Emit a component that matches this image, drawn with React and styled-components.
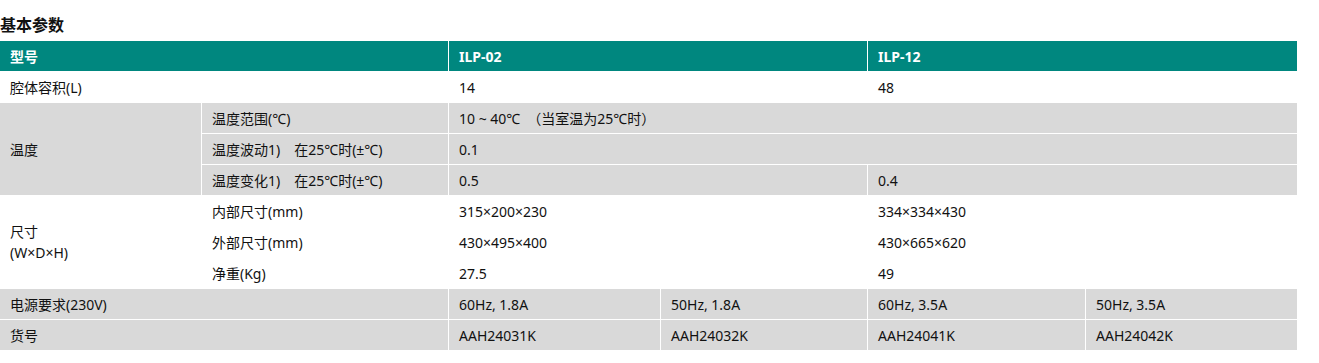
import React from "react";
import styled, { createGlobalStyle } from "styled-components";

const GlobalStyle = createGlobalStyle`
    body {
        margin: 0;
        background: #fff;
        font-family: "Noto Sans", "Noto Sans CJK SC", sans-serif;
        color: #1a1a1a;
    }
`;

const Page = styled.div`
    width: 1297px;
`;

const Title = styled.h2`
    margin: 12px 0 5px;
    font-size: 16px;
    line-height: 24px;
    font-weight: 700;
    font-family: "Noto Sans CJK SC", sans-serif;
    color: #111;
`;

const Grid = styled.div`
    display: grid;
    grid-template-columns: 201px 246px 211px 206px 217px 211px;
    grid-auto-rows: 30px;
    gap: 1px;
    background: #fff;
    font-size: 14px;
`;

const bgs = {
    head: "#00877f",
    gray: "#d9d9d9",
    white: "#fff",
};

const Cell = styled.div`
    grid-column: span ${(p) => p.$cols || 1};
    grid-row: span ${(p) => p.$rows || 1};
    background: ${(p) => bgs[p.$tone || "white"]};
    color: ${(p) => (p.$tone === "head" ? "#fff" : "#111")};
    font-weight: ${(p) => (p.$tone === "head" ? 700 : 400)};
    display: flex;
    flex-direction: column;
    justify-content: center;
    padding: 0 10px;
    line-height: 21px;
    white-space: nowrap;
`;

const rows = [
    { tone: "head", cells: [["型号", 2], ["ILP-02", 2], ["ILP-12", 2]] },
    { tone: "white", cells: [["腔体容积(L)", 2], ["14", 2], ["48", 2]] },
    {
        tone: "gray",
        cells: [
            ["温度", 1, 3],
            ["温度范围(℃)", 1],
            ["10 ~ 40℃　（当室温为25℃时）", 4],
            ["温度波动1)　在25℃时(±℃)", 1],
            ["0.1", 4],
            ["温度变化1)　在25℃时(±℃)", 1],
            ["0.5", 2],
            ["0.4", 2],
        ],
    },
    {
        tone: "white",
        cells: [
            [["尺寸", "(W×D×H)"], 1, 3],
            ["内部尺寸(mm)", 1],
            ["315×200×230", 2],
            ["334×334×430", 2],
            ["外部尺寸(mm)", 1],
            ["430×495×400", 2],
            ["430×665×620", 2],
            ["净重(Kg)", 1],
            ["27.5", 2],
            ["49", 2],
        ],
    },
    {
        tone: "gray",
        cells: [
            ["电源要求(230V)", 2],
            ["60Hz, 1.8A", 1],
            ["50Hz, 1.8A", 1],
            ["60Hz, 3.5A", 1],
            ["50Hz, 3.5A", 1],
            ["货号", 2],
            ["AAH24031K", 1],
            ["AAH24032K", 1],
            ["AAH24041K", 1],
            ["AAH24042K", 1],
        ],
    },
];

function SpecTable() {
    return (
        <Grid>
            {rows.map((group, g) =>
                group.cells.map(([text, cols, rowSpan], i) => (
                    <Cell key={g + "-" + i} $tone={group.tone} $cols={cols} $rows={rowSpan}>
                        {Array.isArray(text)
                            ? text.map((t) => <span key={t}>{t}</span>)
                            : text}
                    </Cell>
                ))
            )}
        </Grid>
    );
}

export default function App() {
    return (
        <>
            <GlobalStyle />
            <Page>
                <Title>基本参数</Title>
                <SpecTable />
            </Page>
        </>
    );
}
